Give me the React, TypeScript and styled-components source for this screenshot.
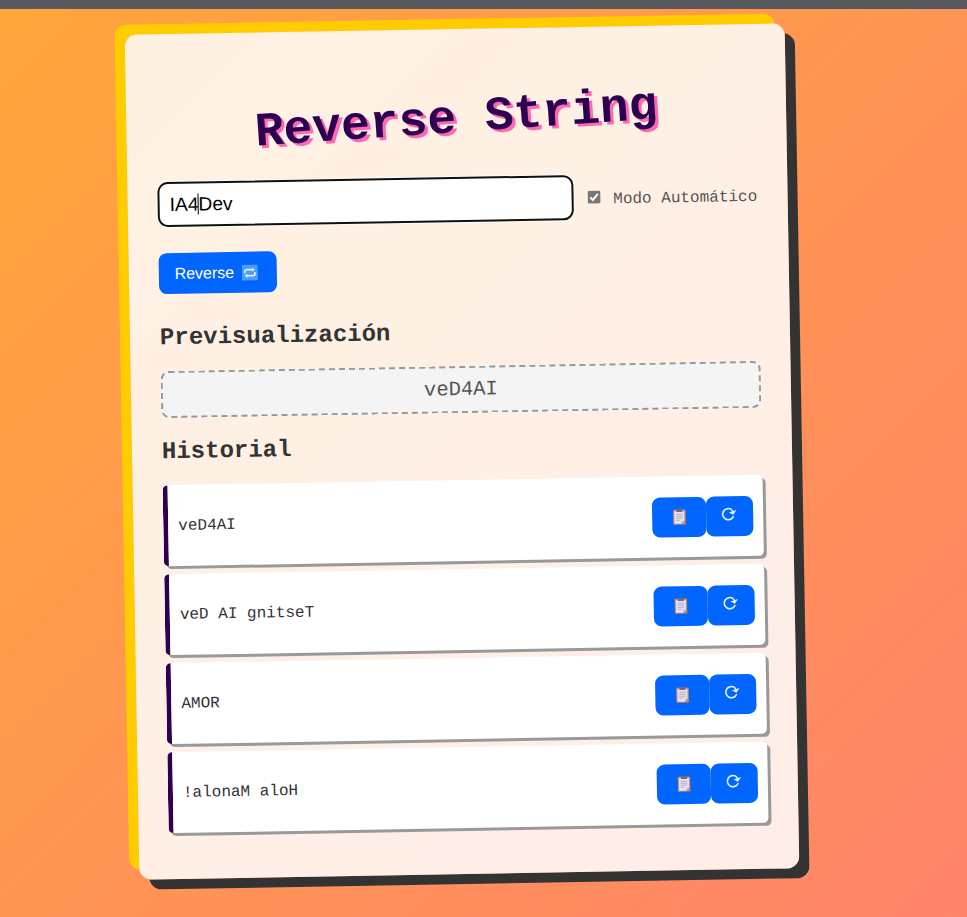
import React from "react";
import styled, { createGlobalStyle } from "styled-components";

const GlobalStyle = createGlobalStyle`
  * { box-sizing: border-box; }
  body { margin: 0; overflow: hidden; }
`;

const mono = `"Courier New", "Liberation Mono", monospace`;
const sans = `Arial, "Liberation Sans", sans-serif`;

const Page = styled.div`
  height: 917px;
  display: flex;
  flex-direction: column;
  font-family: ${mono};
  color: #333;
`;

const TopStrip = styled.div`
  height: 9px;
  flex: none;
  background: #58595e;
`;

const Backdrop = styled.main`
  flex: 1;
  min-height: 0;
  padding: 20px 43px 0 0;
  background: linear-gradient(135deg, #ffa63a, #ff846b);
`;

const Card = styled.section`
  width: 660px;
  height: 845px;
  margin: 0 auto;
  padding: 63px 30px 30px;
  border-radius: 12px;
  background: rgba(255, 255, 255, 0.85);
  box-shadow: 10px 10px 0 #333, -10px -10px 0 #fc0;
  transform: rotate(-1deg);
`;

const Title = styled.h1`
  margin: 0 0 29.5px;
  font-size: 48px;
  line-height: 55px;
  text-align: center;
  white-space: nowrap;
  color: #2e0052;
  text-shadow: 3px 3px 0 #ff69b4;
  transform: rotate(-2.9deg);
`;

const InputRow = styled.div`
  display: flex;
  align-items: center;
  gap: 10px;
  height: 46px;
`;

const TextField = styled.div`
  display: flex;
  align-items: center;
  flex: 1;
  height: 45.5px;
  padding: 0 10px;
  border: 2px solid #101010;
  border-radius: 10px;
  background: #fff;
  box-shadow: 0 0 0 1px rgba(255, 255, 255, 0.8);
  font: 19.2px ${sans};
  color: #000;
`;

const Caret = styled.span`
  width: 1px;
  height: 21px;
  margin: 0 0 0 -1px;
  background: #000;
`;

const AutoLabel = styled.label`
  display: flex;
  align-items: center;
  width: 174px;
  padding: 5px 0 0 4px;
  font-size: 16px;
  white-space: nowrap;
  color: #555;
`;

const CheckIcon = styled.svg`
  width: 13px;
  height: 13px;
  margin: 0 12.6px 5px 0;
  flex: none;
`;

const Button = styled.button<{ $width: number; $height?: number }>`
  display: flex;
  align-items: center;
  justify-content: center;
  gap: 8px;
  width: ${(p) => p.$width}px;
  height: ${(p) => p.$height ?? 40.5}px;
  padding: 0;
  border: 0;
  border-radius: 8px;
  background: #06f;
  color: #fff;
  font: 16px ${sans};
`;

const ReverseSlot = styled.div`
  margin-top: 25.5px;
  height: 41px;

  ${Button} {
    padding: 2px 3px 0 0;
  }
`;

const Heading = styled.h2<{ $top: number; $bottom: number }>`
  margin: ${(p) => p.$top}px 0 ${(p) => p.$bottom}px;
  font-size: 24px;
  line-height: 27px;
`;

const Preview = styled.div`
  display: flex;
  align-items: center;
  justify-content: center;
  height: 46.5px;
  border: 2px dashed #999;
  border-radius: 8px;
  background: #f4f4f4;
  font-size: 20.5px;
  color: #555;
`;

const History = styled.ul`
  display: flex;
  flex-direction: column;
  gap: 8px;
  margin: 0;
  padding: 0;
  list-style: none;
`;

const HistoryItem = styled.li`
  display: flex;
  align-items: center;
  justify-content: space-between;
  height: 81px;
  padding: 1.5px 10px 0;
  border-left: 5px solid #2e0052;
  border-radius: 5px;
  background: #fff;
  box-shadow: 3px 3px 0 #999;
  font-size: 16px;
`;

const Actions = styled.div`
  display: flex;
  align-items: center;
`;

const RepeatIcon = () => (
  <svg width="16" height="16" viewBox="0 0 16 16">
    <rect width="16" height="16" rx="1" fill="#4b9ffb" />
    <path d="M3 8.5V6.5q0-1.5 1.5-1.5h7M13 7.5V9.5q0 1.5-1.5 1.5H4.5" fill="none" stroke="#e6eeff" strokeWidth="1.6" />
    <path d="M10.5 3 13 5l-2.5 2zM5.5 9 3 11l2.5 2z" fill="#e6eeff" />
  </svg>
);

const ClipboardIcon = () => (
  <svg width="14" height="17" viewBox="0 0 14 17">
    <rect x="1" y="1.5" width="12.5" height="15" rx=".7" fill="#c88a68" />
    <path d="M2.2 3h10v9.5l-3 3h-7z" fill="#e9e2f2" />
    <path d="M12.2 12.5 9.2 15.5v-3z" fill="#c9bfd6" />
    <path d="M4.3 3.8V1.7H6q.2-1.5 1.2-1.5T8.4 1.7h1.8v2.1z" fill="#71677f" />
    <path d="M3.8 6h6.8M3.8 8h6.8M3.8 10h6.8M3.8 12h4" stroke="#aaa1b8" strokeWidth=".8" />
  </svg>
);

const ReloadIcon = () => (
  <svg width="16" height="16" viewBox="0 0 16 16">
    <path d="M10.6 3.4A5.6 5.6 0 1 0 12.4 9.8" fill="none" stroke="#e8f1ff" strokeWidth="1.6" />
    <path d="M7.8 6.2 15.4 3.8 12.2 8.4z" fill="#e8f1ff" />
    <path d="M10.4 3.3 12.4 6" stroke="#e8f1ff" strokeWidth="1.5" />
  </svg>
);

const ReloadSlot = styled.span`
  display: flex;
  margin: 0 1px 4px 0;
`;

const entries = ["veD4AI", "veD AI gnitseT", "AMOR", "!alonaM aloH"];

export default function App() {
  return (
    <Page>
      <GlobalStyle />
      <TopStrip />
      <Backdrop>
        <Card>
          <Title>Reverse String</Title>
          <InputRow>
            <TextField>
              IA4<Caret />Dev
            </TextField>
            <AutoLabel>
              <CheckIcon viewBox="0 0 13 13">
                <rect width="13" height="13" rx="2" fill="#767676" />
                <path d="M2.7 6.8 5.2 9.3 10.3 3.2" fill="none" stroke="#fff" strokeWidth="2" />
              </CheckIcon>
              Modo Automático
            </AutoLabel>
          </InputRow>
          <ReverseSlot>
            <Button $width={118}>
              Reverse <RepeatIcon />
            </Button>
          </ReverseSlot>
          <Heading $top={29.5} $bottom={20.5}>Previsualización</Heading>
          <Preview>veD4AI</Preview>
          <Heading $top={20} $bottom={20}>Historial</Heading>
          <History>
            {entries.map((entry) => (
              <HistoryItem key={entry}>
                <span>{entry}</span>
                <Actions>
                  <Button $width={54} aria-label="Copiar">
                    <ClipboardIcon />
                  </Button>
                  <Button $width={47} $height={40} aria-label="Repetir">
                    <ReloadSlot>
                      <ReloadIcon />
                    </ReloadSlot>
                  </Button>
                </Actions>
              </HistoryItem>
            ))}
          </History>
        </Card>
      </Backdrop>
    </Page>
  );
}
